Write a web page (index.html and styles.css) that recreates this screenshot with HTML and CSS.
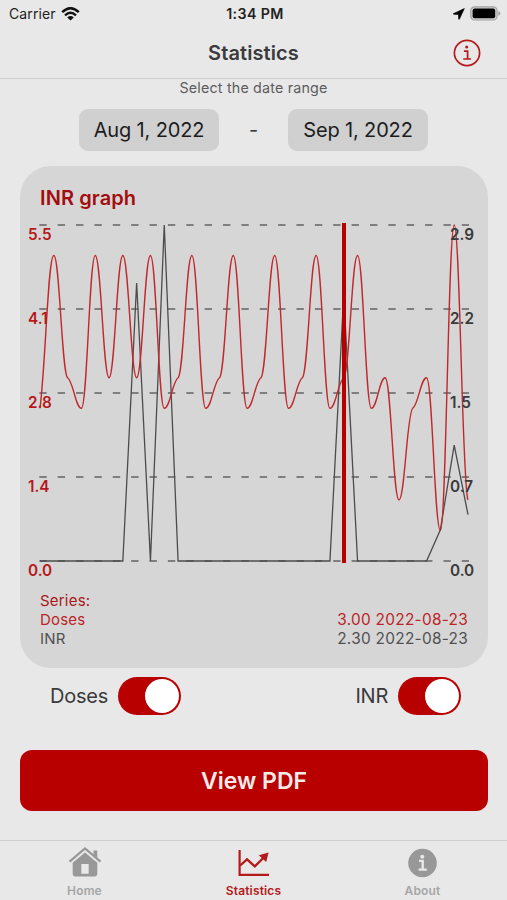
FILE: index.html
```html
<!DOCTYPE html>
<html lang="en">
<head>
    <meta charset="UTF-8">
    <meta name="viewport" content="width=device-width, initial-scale=1.0">
    <title>Statistics</title>
    <link rel="stylesheet" href="styles.css">
</head>
<body>

<div class="status-bar">
    <div class="carrier">
        <span>Carrier</span>
        <svg width="19" height="14" viewBox="0 0 19 14">
            <path d="M1.2 5.2 Q9.5 -2.6 17.8 5.2" fill="none" stroke="#111" stroke-width="2.5"/>
            <path d="M4 8.3 Q9.5 3.2 15 8.3" fill="none" stroke="#111" stroke-width="2.3"/>
            <path d="M6.2 10.4 Q9.5 7.6 12.8 10.4 L9.5 13.6 Z" fill="#111"/>
        </svg>
    </div>
    <div class="time">1:34 PM</div>
    <div class="indicators">
        <svg width="12" height="12" viewBox="0 0 12 12"><path d="M11.3 .6 L.4 5.7 Q.3 6.2 .9 6.2 L5.5 6.4 L5.7 11.1 Q5.9 11.7 6.4 11.1 Z" fill="#000" stroke="#000" stroke-width=".7"/></svg>
        <svg width="31" height="15" viewBox="0 0 31 15">
            <rect x=".8" y=".8" width="26.2" height="13.2" rx="3.8" fill="#d2d2d2" stroke="#a2a2a2" stroke-width="1.2"/>
            <rect x="2.6" y="2.6" width="22.6" height="9.7" rx="2" fill="#000"/>
            <path d="M28.3 5 Q30.4 5.8 30.4 7.4 Q30.4 9 28.3 9.8 Z" fill="#a2a2a2"/>
        </svg>
    </div>
</div>

<header class="header">
    <h1>Statistics</h1>
    <svg class="info" width="28" height="28" viewBox="0 0 28 28">
        <circle cx="14" cy="14" r="12.6" fill="none" stroke="#b5191b" stroke-width="1.7"/>
        <circle cx="13.7" cy="8.1" r="1.5" fill="#b5191b"/>
        <path d="M10.9 12.2 H14.6 V19.8 M10.3 20 H18" fill="none" stroke="#b5191b" stroke-width="1.7"/>
    </svg>
</header>

<main>
    <p class="hint">Select the date range</p>
    <div class="dates">
        <button class="date"><span>Aug 1, 2022</span></button>
        <span class="dash">-</span>
        <button class="date"><span>Sep 1, 2022</span></button>
    </div>

    <section class="card">
        <h2>INR graph</h2>
        <svg class="chart" width="468" height="374" viewBox="20 214 468 374">
            <g id="grid"></g>
            <path id="inr" class="line-inr"/>
            <path id="doses" class="line-doses"/>
            <path class="cursor" d="M344 223 V563"/>
            <g id="labels"></g>
        </svg>
        <div class="legend">
            <div class="row doses"><span class="series">Series:</span></div>
            <div class="row doses"><span>Doses</span><span class="value">3.00 2022-08-23</span></div>
            <div class="row"><span>INR</span><span class="value">2.30 2022-08-23</span></div>
        </div>
    </section>

    <div class="switches">
        <label><span>Doses</span><i class="switch"></i></label>
        <label><span>INR</span><i class="switch"></i></label>
    </div>

    <button class="pdf"><span>View PDF</span></button>
</main>

<nav class="tabs">
    <a class="tab">
        <svg width="34" height="32" viewBox="0 0 34 32">
            <path d="M1.5 15.6 L17 2.4 L32.5 15.6" fill="none" stroke="#989898" stroke-width="2.2"/>
            <path d="M25.5 4.5 H29.3 V12 L25.5 9 Z" fill="#989898"/>
            <path fill-rule="evenodd" d="M17 6.5 L29.3 16.8 V27.5 Q29.3 30.5 26.3 30.5 H7.7 Q4.7 30.5 4.7 27.5 V16.8 Z M13.3 18 V27.7 H20.7 V18 Z" fill="#989898"/>
        </svg>
        <span>Home</span>
    </a>
    <a class="tab active">
        <svg width="34" height="32" viewBox="0 0 34 32">
            <path d="M2.6 4 V28.8 H32" fill="none" stroke="#b5191b" stroke-width="2.2"/>
            <path d="M3.2 19.5 L10 13.3 L17.8 20.3 L28 10.2" fill="none" stroke="#b5191b" stroke-width="2.3"/>
            <path d="M21.8 9.2 L31.6 6.4 L29.2 16 Z" fill="#b5191b"/>
        </svg>
        <span>Statistics</span>
    </a>
    <a class="tab">
        <svg width="34" height="32" viewBox="0 0 34 32">
            <circle cx="16.5" cy="17" r="14.3" fill="#989898"/>
            <circle cx="16.3" cy="10.8" r="2" fill="#e8e8e8"/>
            <path d="M13 14.9 H16.7 V23.6 M12.6 23.6 H20.8" fill="none" stroke="#e8e8e8" stroke-width="2.4"/>
        </svg>
        <span>About</span>
    </a>
</nav>

<script>
    const doses = [
        2.5, 5, 3, 2.5, 5, 3, 5, 3, 5, 2.5, 3, 5, 2.5, 3, 5, 2.5,
        3, 5, 2.5, 3, 5, 2.5, 3, 5, 2.5, 3, 1, 2.5, 3, 0.5, 5.5, 1
    ];
    const inr = new Array(32).fill(0);
    inr[7] = 2.4;
    inr[9] = 2.9;
    inr[22] = 2.3;
    inr[29] = 0.27;
    inr[30] = 1;
    inr[31] = 0.4;

    const left = 40, right = 468, top_ = 225, bottom = 561;
    const step = (right - left) / 31;

    function toPoints(values, max) {
        return values.map((v, i) => [left + i * step, bottom - v / max * (bottom - top_)]);
    }

    // Flat at peaks and valleys, slightly tilted in between
    function slope(points, i) {
        if (i === 0) return -8;
        if (i === points.length - 1) return 2;
        const a = points[i][1] - points[i - 1][1];
        const b = points[i + 1][1] - points[i][1];
        return a * b > 0 ? Math.sign(a) * 0.7 : 0;
    }

    function curve(points) {
        let d = `M${points[0]}`;
        const h = step * 0.42;
        for (let i = 1; i < points.length; i++) {
            const p = points[i - 1], q = points[i];
            d += ` C${p[0] + h} ${p[1] + slope(points, i - 1) * h} ${q[0] - h} ${q[1] - slope(points, i) * h} ${q}`;
        }
        return d;
    }

    document.getElementById('doses').setAttribute('d', curve(toPoints(doses, 5.5)));
    document.getElementById('inr').setAttribute('d', 'M' + toPoints(inr, 2.9).join(' L'));

    const leftLabels = ['5.5', '4.1', '2.8', '1.4', '0.0'];
    const rightLabels = ['2.9', '2.2', '1.5', '0.7', '0.0'];
    let grid = '', labels = '';
    for (let i = 0; i < 5; i++) {
        const y = top_ + i * 84;
        grid += `<path class="grid-line" d="M39.3 ${y} H469"/>`;
        labels += `<text class="label-doses" x="28" y="${y + 15.3}">${leftLabels[i]}</text>`;
        labels += `<text class="label-inr" x="450" y="${y + 15.3}">${rightLabels[i]}</text>`;
    }
    document.getElementById('grid').innerHTML = grid;
    document.getElementById('labels').innerHTML = labels;
</script>

</body>
</html>
```

FILE: styles.css
```css
* {
    box-sizing: border-box;
}
body {
    font-family: Inter, "Liberation Sans", sans-serif;
    margin: 0;
    height: 900px;
    display: flex;
    flex-direction: column;
    background-color: #e8e8e8;
    color: #3a3a3c;
    overflow: hidden;
}
button {
    border: none;
    font-family: inherit;
    cursor: pointer;
}
.status-bar {
    height: 27px;
    padding: 0 6px 0 9px;
    display: grid;
    grid-template-columns: 1fr auto 1fr;
    align-items: center;
    font-size: 14px;
    color: #222;
}
.carrier {
    display: flex;
    align-items: center;
    gap: 5px;
    letter-spacing: 0.1px;
}
.time {
    font-weight: 600;
    font-size: 14.2px;
    letter-spacing: 0.4px;
}
.indicators {
    display: flex;
    justify-content: flex-end;
    align-items: center;
    gap: 5px;
}
.header {
    height: 52px;
    padding: 0 26px;
    display: grid;
    grid-template-columns: 1fr auto 1fr;
    align-items: center;
    border-bottom: 1px solid #cfcfcf;
}
h1 {
    grid-column: 2;
    margin: 0;
    font-size: 20px;
    font-weight: 600;
    letter-spacing: 0.1px;
}
.info {
    justify-self: end;
}
main {
    flex: 1;
    padding: 0 20px;
}
.hint {
    margin: 0;
    height: 19px;
    line-height: 18px;
    font-size: 14.3px;
    letter-spacing: 0.18px;
    text-align: center;
    color: #5c5c5e;
}
.dates {
    margin-top: 11px;
    display: flex;
    justify-content: center;
    align-items: center;
}
.date {
    width: 140px;
    height: 42px;
    padding: 0;
    border-radius: 9px;
    background: #d0d0d0;
    font-size: 20px;
    letter-spacing: -0.15px;
    color: #1c1c1e;
}
.dash {
    width: 69px;
    text-align: center;
    font-size: 20px;
}
.card {
    margin-top: 15px;
    width: 468px;
    height: 502px;
    border-radius: 31px;
    background: #d6d6d6;
}
h2 {
    margin: 0;
    padding: 20px 20px 0;
    height: 48px;
    line-height: 25px;
    font-size: 20px;
    font-weight: 600;
    letter-spacing: 0.1px;
    color: #a30d10;
}
.chart {
    display: block;
}
.grid-line {
    stroke: #636363;
    stroke-width: 1.5;
    stroke-dasharray: 7.4 10.97;
}
.line-inr {
    fill: none;
    stroke: #4c4c4c;
    stroke-width: 1.3;
}
.line-doses {
    fill: none;
    stroke: #c0282c;
    stroke-width: 1.4;
}
.cursor {
    stroke: #b80000;
    stroke-width: 4;
}
.chart text {
    font-size: 15.3px;
    font-weight: 600;
}
.label-doses {
    fill: #b5191b;
}
.label-inr {
    fill: #3a3a3c;
}
.legend {
    padding: 3px 20px 0;
    font-size: 15px;
    line-height: 19px;
    letter-spacing: 0.2px;
    color: #505052;
}
.row {
    display: flex;
    justify-content: space-between;
}
.value {
    font-size: 15.4px;
    letter-spacing: 0.28px;
}
.doses {
    color: #bb2528;
}
.series {
    color: #a8181b;
}
.switches {
    height: 58px;
    padding: 0 27px 2px 30px;
    display: flex;
    justify-content: space-between;
    align-items: center;
    font-size: 20px;
    letter-spacing: -0.25px;
}
.switches label {
    display: flex;
    align-items: center;
    gap: 10px;
}
.switches label:last-child {
    margin-right: -1px;
}
.switch {
    width: 63px;
    height: 38px;
    padding: 2px;
    border-radius: 19px;
    background: #b80000;
    display: flex;
    justify-content: flex-end;
}
.switch::after {
    content: "";
    width: 34px;
    height: 34px;
    border-radius: 50%;
    background: #fff;
}
.pdf {
    margin-top: 24px;
    width: 468px;
    height: 61px;
    border-radius: 12px;
    background: #b80000;
    color: #f4eaea;
    font-size: 23px;
    font-weight: 600;
}
.tabs {
    height: 60px;
    border-top: 1px solid #cfcfcf;
    display: grid;
    grid-template-columns: repeat(3, 1fr);
    padding-top: 5px;
}
.tab {
    display: flex;
    flex-direction: column;
    align-items: center;
    font-size: 12px;
    line-height: 14px;
    font-weight: 600;
    letter-spacing: 0.15px;
    color: #a6a6a6;
}
.tab span {
    margin-top: 6px;
}
.active {
    color: #b5191b;
}
```
